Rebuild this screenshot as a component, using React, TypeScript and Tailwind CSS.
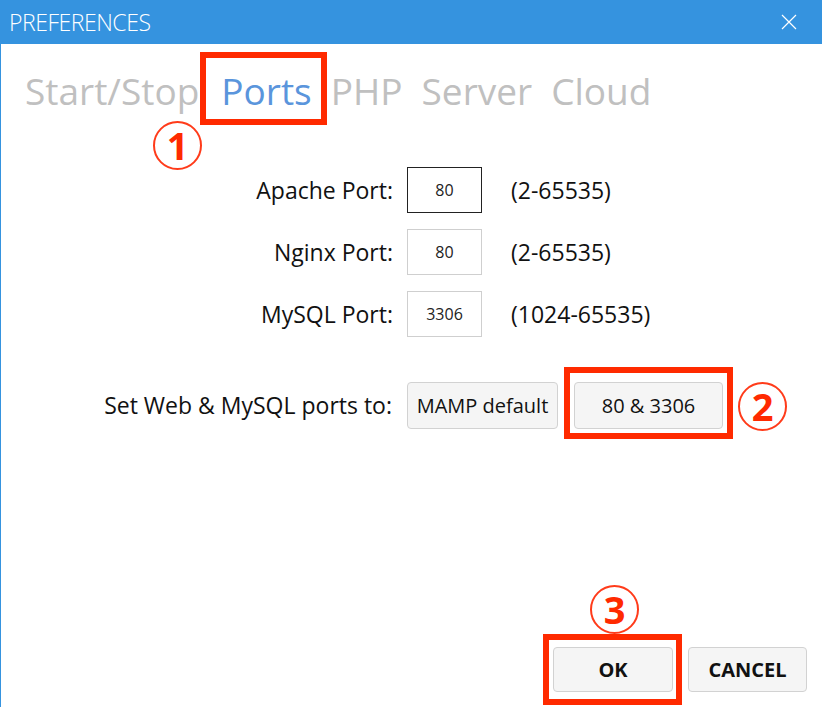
import React from "react";

const tabs = ["Start/Stop", "Ports", "PHP", "Server", "Cloud"];

const ports = [
  { label: "Apache Port:", value: "80", range: "(2-65535)", focused: true },
  { label: "Nginx Port:", value: "80", range: "(2-65535)", focused: false },
  { label: "MySQL Port:", value: "3306", range: "(1024-65535)", focused: false },
];

function Step({ n, className }: { n: string; className: string }) {
  return (
    <div
      className={`absolute flex h-[49px] w-[49px] items-center justify-center rounded-full border-2 border-[#ff3b1a] text-[38px] font-bold leading-none text-[#ff2a00] ${className}`}
    >
      <span className="-mt-[2px]">{n}</span>
    </div>
  );
}

export default function App() {
  return (
    <div
      className="flex h-[707px] w-[822px] flex-col overflow-hidden border-l border-[#3593df] bg-white"
      style={{ fontFamily: '"Open Sans", "Noto Sans", sans-serif' }}
    >
      {/* title bar */}
      <div className="flex h-[44px] shrink-0 items-center justify-between bg-[#3593df] pl-[8px] pr-[25px]">
        <span className="text-[23px] font-light tracking-[-0.02em] text-white">
          PREFERENCES
        </span>
        <svg width="16" height="16" viewBox="0 0 16 16" className="text-white">
          <path d="M1 1L15 15M15 1L1 15" stroke="currentColor" strokeWidth="1.2" />
        </svg>
      </div>

      {/* tabs */}
      <div className="relative flex h-[86px] shrink-0 items-center gap-[19px] pl-[24px] pt-[8px]">
        {tabs.map((t) => (
          <div key={t} className={t === "Ports" ? "relative ml-[3px]" : "relative"}>
            <span
              className={`text-[37px] leading-none ${
                t === "Ports" ? "text-[#5a95dc]" : "text-[#c0c0c0]"
              }`}
            >
              {t}
            </span>
            {t === "Ports" ? (
              <div className="absolute -left-[21px] -right-[15px] -top-[20px] -bottom-[14px] border-[6px] border-[#ff2a00]" />
            ) : null}
          </div>
        ))}
        <Step n="1" className="left-[152px] top-[77px]" />
      </div>

      {/* ports form */}
      <div className="mt-[37px] flex flex-col gap-[16px]">
        {ports.map((p) => (
          <div key={p.label} className="flex h-[46px] items-center">
            <span className="w-[392px] text-right text-[23px] text-[#111]">
              {p.label}
            </span>
            <div
              className={`ml-[14px] flex h-[46px] w-[75px] items-center justify-center text-[16px] text-[#222] ${
                p.focused ? "border-[1.5px] border-[#222]" : "border border-[#cfcfcf]"
              }`}
            >
              {p.value}
            </div>
            <span className="ml-[29px] text-[23px] text-[#111]">{p.range}</span>
          </div>
        ))}
      </div>

      <div className="mt-[45px] flex h-[47px] items-center">
        <span className="w-[391px] text-right text-[23px] text-[#111]">
          Set Web &amp; MySQL ports to:
        </span>
        <button className="ml-[15px] h-[47px] w-[151px] rounded-[4px] border border-[#d2d2d2] bg-[#f5f5f5] text-[20px] text-[#111]">
          MAMP default
        </button>
        <div className="relative ml-[16px]">
          <button className="h-[47px] w-[149px] rounded-[4px] border border-[#d2d2d2] bg-[#f5f5f5] text-[20px] text-[#111]">
            80 &amp; 3306
          </button>
          <div className="absolute -bottom-[10px] -left-[10px] -right-[10px] -top-[15px] border-[6px] border-[#ff2a00]" />
          <Step n="2" className="left-[164px] top-0" />
        </div>
      </div>

      {/* footer */}
      <div className="mt-auto mb-[15px] flex justify-end gap-[15px] pr-[15px]">
        <div className="relative">
          <button className="h-[45px] w-[120px] rounded-[4px] border border-[#d2d2d2] bg-[#f5f5f5] text-[20px] font-bold text-[#111]">
            OK
          </button>
          <div className="absolute -bottom-[13px] -left-[10px] -right-[9px] -top-[13px] border-[6px] border-[#ff2a00]" />
          <Step n="3" className="left-[37px] -top-[62px]" />
        </div>
        <button className="h-[45px] w-[119px] rounded-[4px] border border-[#d2d2d2] bg-[#f5f5f5] text-[20px] font-bold text-[#111]">
          CANCEL
        </button>
      </div>
    </div>
  );
}
